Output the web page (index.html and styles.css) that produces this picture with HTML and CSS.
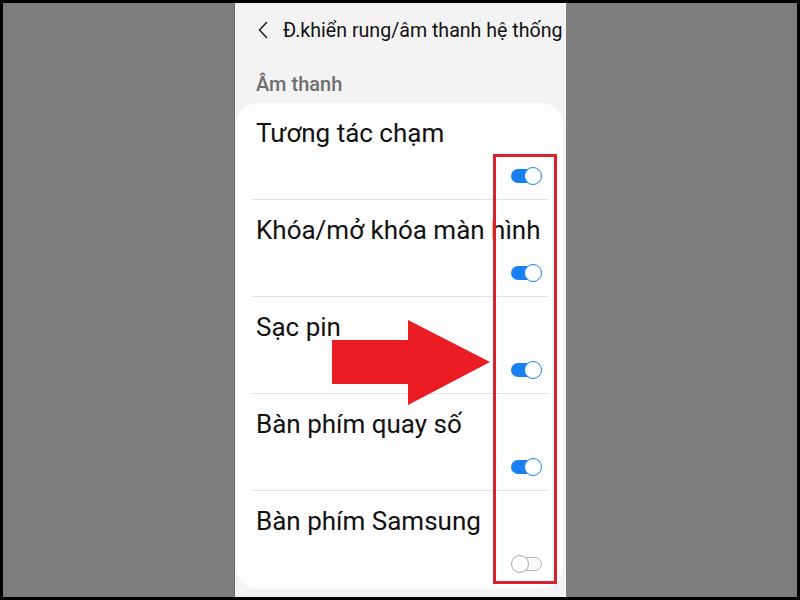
FILE: index.html
```html
<!DOCTYPE html>
<html lang="vi">
<head>
<meta charset="utf-8">
<title>Đ.khiển rung/âm thanh hệ thống</title>
<link rel="stylesheet" href="styles.css">
</head>
<body>
<div class="stage">
  <div class="phone">
    <div class="header">
      <svg class="back" width="10" height="18" viewBox="0 0 10 18"><path d="M8.5 1.5 L1.5 9 L8.5 16.5" fill="none" stroke="#222" stroke-width="1.6" stroke-linecap="round" stroke-linejoin="round"/></svg>
      <span class="title">Đ.khiển rung/âm thanh hệ thống</span>
    </div>
    <div class="section">Âm thanh</div>
    <div class="card">
      <div class="row">
        <div class="label">Tương tác chạm</div>
        <div class="toggle on"><span class="knob"></span></div>
      </div>
      <div class="sep"></div>
      <div class="row">
        <div class="label">Khóa/mở khóa màn hình</div>
        <div class="toggle on"><span class="knob"></span></div>
      </div>
      <div class="sep"></div>
      <div class="row">
        <div class="label">Sạc pin</div>
        <div class="toggle on"><span class="knob"></span></div>
      </div>
      <div class="sep"></div>
      <div class="row">
        <div class="label">Bàn phím quay số</div>
        <div class="toggle on"><span class="knob"></span></div>
      </div>
      <div class="sep"></div>
      <div class="row last">
        <div class="label">Bàn phím Samsung</div>
        <div class="toggle off"><span class="knob"></span></div>
      </div>
    </div>
  </div>
  <div class="highlight"></div>
  <svg class="arrow" width="800" height="600" viewBox="0 0 800 600"><polygon points="332,340 408,340 408,320 490,362 408,405 408,384 332,384" fill="#ec1c24"/></svg>
</div>
</body>
</html>
```
FILE: styles.css
```css
html, body {
  margin: 0;
  padding: 0;
  background: #000;
}
.stage {
  position: relative;
  margin: 3px;
  width: 794px;
  height: 594px;
  background: #7f7e7f;
  display: flex;
  justify-content: center;
  font-family: Roboto, "Noto Sans", sans-serif;
}
.phone {
  width: 332px;
  height: 594px;
  background: #f3f3f3;
  box-shadow: inset 1px 0 0 #6a6a6a;
  display: flex;
  flex-direction: column;
  overflow: hidden;
}
.header {
  height: 43px;
  display: flex;
  align-items: flex-end;
  padding-left: 24px;
  gap: 15px;
}
.back {
  margin-bottom: 6px;
  flex: none;
}
.title {
  font-size: 19.6px;
  line-height: 24px;
  color: #111;
  white-space: nowrap;
  margin-bottom: 2px;
}
.section {
  font-size: 20px;
  font-weight: 500;
  color: #6e6e6e;
  line-height: 24px;
  padding: 27px 0 0 22px;
  height: 32px;
}
.card {
  margin: 0 3px 0 2px;
  background: #fdfdfd;
  border-radius: 22px;
  flex: 1;
  margin-bottom: 8px;
}
.row {
  padding: 15px 21px 15px 20px;
  display: flex;
  flex-direction: column;
}
.row.last {
  padding-bottom: 17px;
}
.label {
  font-size: 26px;
  line-height: 30px;
  color: #121212;
  white-space: nowrap;
}
.sep {
  height: 1px;
  background: #e2e2e2;
  margin: 0 15px 0 16px;
}
.toggle {
  align-self: flex-end;
  margin-top: 20px;
  width: 31px;
  height: 16px;
  position: relative;
}
.toggle::before {
  content: "";
  position: absolute;
  left: 0;
  right: 2px;
  top: 1px;
  height: 14px;
  border-radius: 7px;
  box-sizing: border-box;
}
.toggle.on::before {
  background: #1a7ff0;
}
.toggle.off::before {
  left: 2px;
  right: 0;
  border: 1.3px solid #b3b3b3;
  background: #fbfbfb;
}
.knob {
  position: absolute;
  top: -1px;
  width: 18px;
  height: 18px;
  border-radius: 50%;
  box-sizing: border-box;
  background: #fff;
}
.toggle.on .knob {
  right: 0;
  border: 1.5px solid #1a7ff0;
}
.toggle.off .knob {
  left: 0;
  border: 1.3px solid #a8a8a8;
}
.highlight {
  position: absolute;
  left: 490px;
  top: 151px;
  width: 58px;
  height: 424px;
  border: 3px solid #d9222b;
}
.arrow {
  position: absolute;
  left: -3px;
  top: -3px;
}
```
